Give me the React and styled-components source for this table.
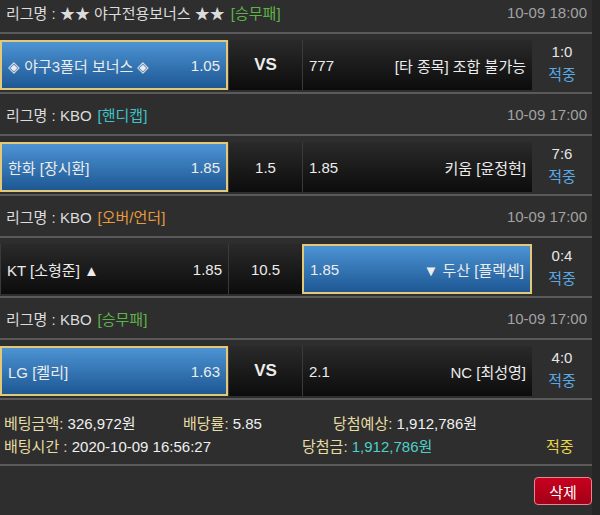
import styled, { createGlobalStyle } from "styled-components";

const GlobalStyle = createGlobalStyle`
  html, body {
    margin: 0;
    padding: 0;
    background: #262626;
    font-family: "Liberation Sans", "Noto Sans CJK KR", sans-serif;
    overflow: hidden;
  }
`;

const Wrapper = styled.div`
  width: 592px;
  margin-top: -8px;
  background: #2e2e2e;
  color: #e2e2e2;
  font-size: 15px;
`;

const Header = styled.div`
  height: 40px;
  display: flex;
  align-items: center;
  justify-content: space-between;
  padding: 0 5px 0 6px;
  border-bottom: 2px solid #5a5a5a;
`;

const League = styled.span`
  color: #dcdcdc;
`;

const Type = styled.span`
  margin-left: 6px;
  color: ${(p) => p.$color};
`;

const DateText = styled.span`
  color: #a3a3a3;
`;

const Row = styled.div`
  height: 60px;
  display: flex;
  align-items: flex-start;
  padding-top: 6px;
  box-sizing: border-box;
  border-bottom: 2px solid #5a5a5a;
`;

const Cell = styled.div`
  height: 50px;
  box-sizing: border-box;
  display: flex;
  align-items: center;
  justify-content: space-between;
  padding: 0 6px;
  width: ${(p) => p.$w}px;
  color: #ececec;
  border: ${(p) => (p.$on ? "2px solid #e3c878" : "none")};
  border-left: ${(p) => (p.$on ? "2px solid #e3c878" : "1px solid #3a3a3a")};
  background: ${(p) =>
    p.$on
      ? "linear-gradient(#4d93d3, #1d5894)"
      : "linear-gradient(#2a2a2a, #0c0c0c)"};
`;

const Mid = styled(Cell)`
  justify-content: center;
  font-weight: ${(p) => (p.$bold ? 700 : 400)};
  font-size: ${(p) => (p.$bold ? 17 : 15)}px;
`;

const Result = styled.div`
  width: 60px;
  height: 50px;
  display: flex;
  flex-direction: column;
  align-items: center;
  justify-content: center;
  gap: 3px;
  margin-top: -2px;
  color: #e6e6e6;
`;

const Hit = styled.span`
  color: #5aa9e3;
`;

const Summary = styled.div`
  padding: 11px 0 0 4px;
  height: 66px;
  box-sizing: border-box;
  border-bottom: 2px solid #5a5a5a;
`;

const SumLine = styled.div`
  display: grid;
  grid-template-columns: ${(p) => p.$cols};
  height: 23px;
  align-items: center;
`;

const Label = styled.span`
  color: #e6dca4;
`;

const Value = styled.span`
  color: ${(p) => p.$color || "#f0f0f0"};
`;

const Footer = styled.div`
  display: flex;
  justify-content: flex-end;
  padding: 11px 0 20px;
`;

const DeleteButton = styled.button`
  width: 58px;
  height: 28px;
  border-radius: 4px;
  border: 1px solid #e38893;
  background: linear-gradient(#c8001e, #a30018);
  color: #fff;
  font-family: inherit;
  font-size: 15px;
  padding: 0;
  cursor: pointer;
`;

const GREEN = "#5fb248";
const TEAL = "#3fc3c8";
const ORANGE = "#e89a3c";

const matches = [
  {
    league: "★★ 야구전용보너스 ★★",
    type: "승무패",
    color: GREEN,
    date: "10-09 18:00",
    home: "◈ 야구3폴더 보너스 ◈",
    homeOdds: "1.05",
    mid: "VS",
    awayOdds: "777",
    away: "[타 종목] 조합 불가능",
    pick: "home",
    score: "1:0",
  },
  {
    league: "KBO",
    type: "핸디캡",
    color: TEAL,
    date: "10-09 17:00",
    home: "한화 [장시환]",
    homeOdds: "1.85",
    mid: "1.5",
    awayOdds: "1.85",
    away: "키움 [윤정현]",
    pick: "home",
    score: "7:6",
  },
  {
    league: "KBO",
    type: "오버/언더",
    color: ORANGE,
    date: "10-09 17:00",
    home: "KT [소형준] ▲",
    homeOdds: "1.85",
    mid: "10.5",
    awayOdds: "1.85",
    away: "▼ 두산 [플렉센]",
    pick: "away",
    score: "0:4",
  },
  {
    league: "KBO",
    type: "승무패",
    color: GREEN,
    date: "10-09 17:00",
    home: "LG [켈리]",
    homeOdds: "1.63",
    mid: "VS",
    awayOdds: "2.1",
    away: "NC [최성영]",
    pick: "home",
    score: "4:0",
  },
];

const MatchBlock = ({ m }) => (
  <>
    <Header>
      <League>
        리그명 : {m.league}
        <Type $color={m.color}>[{m.type}]</Type>
      </League>
      <DateText>{m.date}</DateText>
    </Header>
    <Row>
      <Cell $w={228} $on={m.pick === "home"}>
        <span>{m.home}</span>
        <span>{m.homeOdds}</span>
      </Cell>
      <Mid $w={74} $bold={m.mid === "VS"}>
        {m.mid}
      </Mid>
      <Cell $w={230} $on={m.pick === "away"}>
        <span>{m.awayOdds}</span>
        <span>{m.away}</span>
      </Cell>
      <Result>
        <span>{m.score}</span>
        <Hit>적중</Hit>
      </Result>
    </Row>
  </>
);

export default function App() {
  return (
    <Wrapper>
      <GlobalStyle />
      {matches.map((m, i) => (
        <MatchBlock key={i} m={m} />
      ))}
      <Summary>
        <SumLine $cols="179px 150px 1fr">
          <span>
            <Label>베팅금액: </Label>
            <Value>326,972원</Value>
          </span>
          <span>
            <Label>배당률: </Label>
            <Value>5.85</Value>
          </span>
          <span>
            <Label>당첨예상: </Label>
            <Value>1,912,786원</Value>
          </span>
        </SumLine>
        <SumLine $cols="298px 244px 1fr">
          <span>
            <Label>배팅시간 : </Label>
            <Value>2020-10-09 16:56:27</Value>
          </span>
          <span>
            <Label>당첨금: </Label>
            <Value $color="#4fd0c8">1,912,786원</Value>
          </span>
          <Value $color="#e8d54a">적중</Value>
        </SumLine>
      </Summary>
      <Footer>
        <DeleteButton type="button">삭제</DeleteButton>
      </Footer>
    </Wrapper>
  );
}
